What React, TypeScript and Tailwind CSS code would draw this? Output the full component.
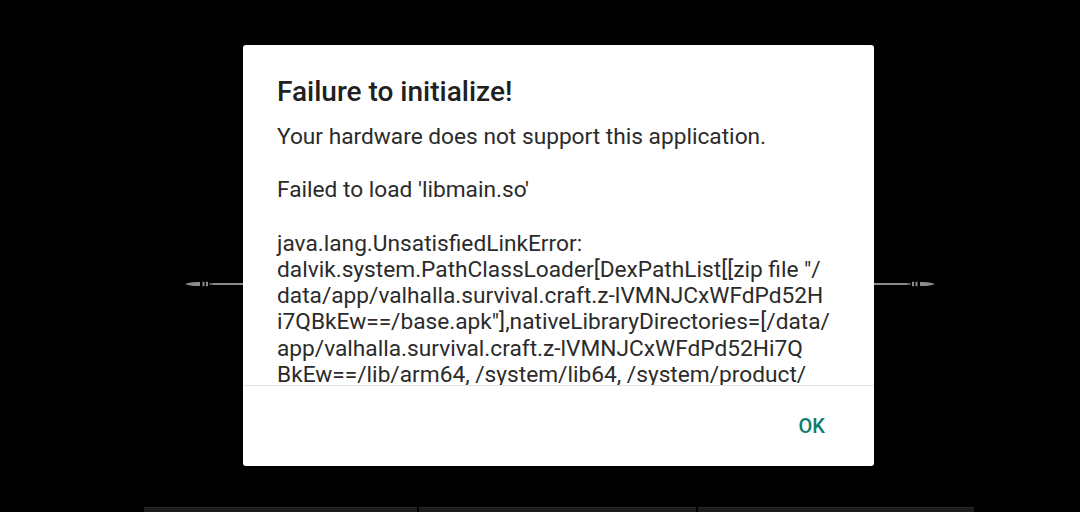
const messageLines = [
  'Your hardware does not support this application.',
  '',
  "Failed to load 'libmain.so'",
  '',
  'java.lang.UnsatisfiedLinkError:',
  'dalvik.system.PathClassLoader[DexPathList[[zip file "/',
  'data/app/valhalla.survival.craft.z-lVMNJCxWFdPd52H',
  'i7QBkEw==/base.apk"],nativeLibraryDirectories=[/data/',
  'app/valhalla.survival.craft.z-lVMNJCxWFdPd52Hi7Q',
  'BkEw==/lib/arm64, /system/lib64, /system/product/',
]

function Spear({ flip }: { flip?: boolean }) {
  return (
    <svg width="28" height="8" viewBox="0 0 28 8" className={flip ? 'scale-x-[-1]' : ''}>
      <path d="M0 4 C4 2.2 10 1.6 15 2 L15 6 C10 6.4 4 5.8 0 4 Z" fill="#8c8c8c" />
      <rect x="17.5" y="1.8" width="2" height="4.4" fill="#8c8c8c" />
      <rect x="21" y="1.8" width="2" height="4.4" fill="#8c8c8c" />
      <rect x="24.5" y="3.3" width="3.5" height="1.4" fill="#8c8c8c" />
    </svg>
  )
}

export default function App() {
  return (
    <div className="relative w-[1080px] h-[512px] bg-black overflow-hidden font-['Roboto','Noto_Sans',sans-serif]">
      {/* background scene */}
      <div className="flex flex-col h-full">
        <div className="mt-[280px] ml-[185px] w-[750px] flex items-center">
          <Spear />
          <div className="flex-1 h-[1.5px] bg-[#8c8c8c]" />
          <Spear flip />
        </div>
        <div className="mt-auto ml-[144px] w-[830px] h-[5px] flex gap-[2px]">
          <div className="w-[273px] bg-[#1c1c1c] border-t border-[#2a2a2a]" />
          <div className="w-[277px] bg-[#1c1c1c] border-t border-[#2a2a2a]" />
          <div className="flex-1 bg-[#1c1c1c] border-t border-[#2a2a2a]" />
        </div>
      </div>

      {/* dialog */}
      <div className="absolute left-[243px] top-[45px] w-[631px] h-[421px] bg-white rounded-[3px] flex flex-col">
        <div className="pt-[31px] px-[34px]">
          <h1 className="text-[28px] leading-[32px] font-medium text-[#212121]">Failure to initialize!</h1>
        </div>
        {/* scrolling message, cut at the divider */}
        <div className="mt-[16px] h-[261px] overflow-hidden px-[34px]">
          {messageLines.map((line, i) => (
            <div
              key={i}
              className={
                line === ''
                  ? 'h-[27px]'
                  : 'whitespace-nowrap text-[22.7px] leading-[26.3px] h-[26.3px] text-[#2b2b2b]'
              }
            >
              {line}
            </div>
          ))}
        </div>
        <div className="h-px bg-[#e3e3e3]" />
        <div className="flex-1 flex items-center justify-end pr-[49px]">
          <span className="text-[20px] font-medium text-[#0e7c6b]">OK</span>
        </div>
      </div>
    </div>
  )
}
